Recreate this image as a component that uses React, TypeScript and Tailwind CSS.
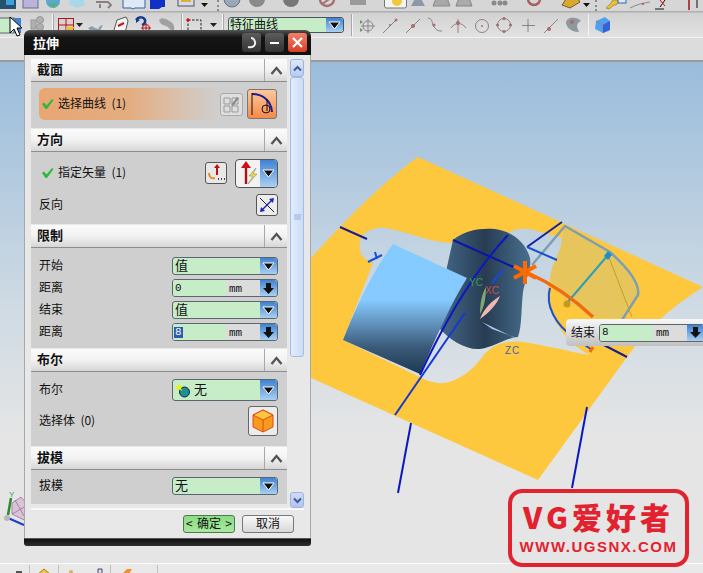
import React from "react";

const CJK = "font-['Noto_Sans_CJK_SC','Liberation_Sans',sans-serif]";

function ArrowBtn({ solid = false }: { solid?: boolean }) {
  return (
    <div className="w-[17px] shrink-0 self-stretch bg-gradient-to-b from-[#3f82d2] to-[#a9d0f2] flex items-center justify-center rounded-r-[3px]">
      {solid ? (
        <svg width="13" height="13" viewBox="0 0 13 13">
          <path d="M4 1h5v5h3l-5.500 6L1 6h3z" fill="#111" />
        </svg>
      ) : (
        <svg width="13" height="9" viewBox="0 0 13 9">
          <path d="M1 1h11L6.500 8z" fill="#111" stroke="#fff" strokeWidth="1" />
        </svg>
      )}
    </div>
  );
}

function Combo({ text, h = "h-[18px]", icon }: { text: string; h?: string; icon?: boolean }) {
  return (
    <div className={`w-[106px] ${h} flex border border-[#5c6670] rounded-[3px] bg-[#c6ecc8]`}>
      <div className="flex-1 flex items-center pl-[2px] gap-[3px] text-[13px] leading-none text-[#111]">
        {icon && (
          <svg width="16" height="16" viewBox="0 0 16 16">
            <circle cx="9.500" cy="10" r="5" fill="#1f8f8f" stroke="#123" strokeWidth="1" />
            <path d="M4 1l1 3 3 0-2 2 1 3-3-2-3 2 1-3-2-2 3 0z" fill="#e8f020" />
          </svg>
        )}
        <span className="pb-[3px]">{text}</span>
      </div>
      <ArrowBtn />
    </div>
  );
}

function NumBox({ value, selected }: { value: string; selected?: boolean }) {
  return (
    <div className="w-[106px] h-[18px] flex border border-[#5c6670] rounded-[3px] bg-[#dcdcdc] overflow-hidden font-['Liberation_Mono',monospace] text-[11px] leading-none text-[#111]">
      <div className="w-[53px] bg-[#c6ecc8] flex items-center pl-[1px]">
        <span className={selected ? "bg-[#2a5cb0] text-white px-[1px]" : "px-[1px]"}>{value}</span>
      </div>
      <div className="flex-1 flex items-center pl-[3px] pt-[2px]">mm</div>
      <ArrowBtn solid />
    </div>
  );
}

function Section({ title, bodyClass, children }: { title: string; bodyClass: string; children: React.ReactNode }) {
  return (
    <div className="w-[256px] mb-[1px]">
      <div className="h-[22px] flex items-stretch bg-gradient-to-b from-[#fbfbfb] via-[#f2f2f2] to-[#d6d6d6]">
        <div className="flex-1 pl-[6px] pb-[3px] flex items-center text-[13px] font-bold text-[#111] leading-none">{title}</div>
        <div className="w-[23px] border-l border-[#a8a8a8] flex items-center justify-center">
          <svg width="13" height="9" viewBox="0 0 13 9">
            <path d="M1.500 8L6.500 2l5 6" fill="none" stroke="#555" strokeWidth="2.400" />
          </svg>
        </div>
      </div>
      <div className={`border-t border-[#8d8d8d] bg-[#cfcfcf] ${bodyClass}`}>{children}</div>
    </div>
  );
}

function Row({ label, className, children }: { label: string; className: string; children: React.ReactNode }) {
  return (
    <div className={`flex items-center justify-between pl-[8px] pr-[9px] text-[12px] text-[#111] leading-none ${className}`}>
      <span className="pb-[3px]">{label}</span>
      {children}
    </div>
  );
}

function Check() {
  return (
    <svg width="13" height="12" viewBox="0 0 13 12" className="shrink-0">
      <path d="M1 6l2-1.500 2.500 3L11 1l1.500 1-6.500 9H4.500z" fill="#2cb83c" />
    </svg>
  );
}

function TopStrip() {
  return (
    <svg width="703" height="11" viewBox="0 0 703 11" className="block">
      <rect x="0" y="-6" width="16" height="15" fill="#26506e" />
      <rect x="6" y="-4" width="8" height="9" fill="#3f9fd8" />
      <rect x="23" y="-5" width="15" height="13" fill="#b9b4d8" stroke="#6a6a98" />
      <circle cx="53" cy="1" r="7" fill="#58a8d8" />
      <path d="M48 3l6 5 4-5z" fill="#5cb070" />
      <path d="M69-3h14l2 8-8 3-8-4z" fill="#a8d8ea" />
      <path d="M96 2h12l3 3-3 3M100 4v4" fill="none" stroke="#8a8080" strokeWidth="2" />
      <path d="M123-4h10l2 2 2-2h8v12h-10l-2 1-2-1h-8z" fill="#dfe8f5" stroke="#3062a8" />
      <path d="M150-4h15v11h-3l-3 2h-9z" fill="#1030c8" />
      <rect x="178" y="-5" width="16" height="11" fill="#d8d8f0" stroke="#555" />
      <rect x="181" y="-2" width="10" height="4" fill="#e0b030" />
      <path d="M201 3h7l-3.500 4z" fill="#111" />
      <path d="M218 0v2M218 5v2M218 9v2" stroke="#8a8a8a" strokeWidth="2" />
      <circle cx="232" cy="-1" r="8" fill="#9aa8b8" stroke="#6a7280" />
      <circle cx="257" cy="-1" r="8" fill="#8a8a8a" />
      <circle cx="291" cy="-1" r="8" fill="#777" />
      <circle cx="327" cy="-1" r="7" fill="none" stroke="#a87070" strokeWidth="2.500" />
      <path d="M322 4l9-6" stroke="#a87070" strokeWidth="2" />
      <rect x="350" y="-4" width="16" height="9" fill="#9a9a9a" />
      <rect x="384.500" y="-4" width="22" height="12" rx="2" fill="#f4f4f4" stroke="#777" />
      <circle cx="397" cy="1" r="5" fill="#f0c838" />
      <path d="M411 6l5-9h4l5 9z" fill="#8a98a8" />
      <path d="M433 6l3-8h11l3 8z" fill="#a8a8a8" stroke="#8a8a8a" />
      <path d="M456 6l3-8h10l3 8z" fill="#ababab" stroke="#907f7f" />
      <circle cx="494" cy="3" r="2.500" fill="#8a8a8a" />
      <circle cx="500" cy="3" r="2.500" fill="#8a8a8a" />
      <circle cx="505" cy="3" r="2.500" fill="#8a8a8a" />
      <circle cx="534" cy="-1" r="6" fill="none" stroke="#a86060" strokeWidth="2.500" />
      <path d="M562 5l4-6h12l2 3-10 6z" fill="#d8a830" stroke="#7a5a20" />
      <path d="M583 3h7l-3.500 4z" fill="#111" />
      <path d="M596 0v2M596 5v2M596 9v2" stroke="#8a8a8a" strokeWidth="2" />
      <path d="M606 8l5-5 2-3h4l2 2-3 3h-2l-5 4z" fill="#e8c040" stroke="#9a7a20" strokeWidth="0.700" />
      <rect x="618" y="-3" width="8" height="6" fill="#dfe8f5" stroke="#3062a8" />
      <path d="M630 8c6-3 12-5 20-6" fill="none" stroke="#8a8a8a" />
      <circle cx="643" cy="4" r="1" fill="#c04040" />
      <path d="M655 9h9M660 7l5-7" fill="none" stroke="#111" />
      <path d="M660 0l5 6" stroke="#d01010" />
      <path d="M689 0v10" stroke="#a01010" strokeWidth="1.500" />
      <path d="M697-2v10M697-.500h6" stroke="#111" fill="none" />
    </svg>
  );
}

function LeftStrip() {
  return (
    <svg width="228" height="25" viewBox="0 13 228 25" className="block shrink-0">
      <rect x="-1" y="18" width="15" height="15" fill="#c6ecc8" stroke="#5c6670" />
      <rect x="14" y="18" width="7" height="15" fill="#3f82d2" />
      <g fill="#b0b0b0" stroke="#989898">
        <circle cx="40" cy="20" r="3.500" />
        <circle cx="40" cy="27" r="3.500" />
        <rect x="31" y="20" width="5" height="9" />
      </g>
      <path d="M52.500 14v22" stroke="#f4f4f4" />
      <path d="M53.500 14v22" stroke="#a8a8a8" />
      <rect x="58.500" y="18.500" width="15" height="14" fill="#dbd0d0" stroke="#a81818" />
      <path d="M66 18v15M58 25h16" stroke="#a81818" />
      <path d="M66 27l8 0-2 6h-5z" fill="#f0c030" />
      <path d="M76 23h7l-3.500 4z" fill="#222" />
      <path d="M88 28c2 3 8 5 12 3l3-6-3 1-2 3-3-1-3-2z" fill="#8fa0ac" />
      <path d="M114 30l3-10 9-3 2 4-3 12-9-1z" fill="#f4f4f4" stroke="#555" />
      <path d="M118 26l6-3" stroke="#c01818" strokeWidth="2" />
      <path d="M136 20c3-4 8-3 9 0s-1 4-3 5" fill="none" stroke="#123a90" strokeWidth="2.500" />
      <path d="M136 18v5l4-3z" fill="#123a90" />
      <circle cx="146" cy="28" r="3.500" fill="none" stroke="#b01818" />
      <path d="M146 23v10M141 28h10" stroke="#b01818" />
      <path d="M159 20c4-4 8 0 12 2s4 8 2 10c-3-2-4-5-7-6s-6-2-7-6z" fill="#a0a0a0" />
      <path d="M181.500 14v22" stroke="#a8a8a8" />
      <path d="M182.500 14v22" stroke="#f4f4f4" />
      <path d="M188 20h13v12h-13z" fill="none" stroke="#222" strokeDasharray="2.500 1.500" />
      <circle cx="188" cy="20" r="1.700" fill="#d01010" />
      <path d="M210 23h7l-3.500 4z" fill="#222" />
      <path d="M222.500 14v22" stroke="#f4f4f4" />
      <path d="M223.500 14v22" stroke="#a8a8a8" />
    </svg>
  );
}

function RightStrip() {
  const g = "#8a8484";
  const r = "#a86c6c";
  return (
    <svg width="359" height="25" viewBox="344 13 359 25" className="block shrink-0">
      <path d="M351.500 14v22" stroke="#a8a8a8" />
      <path d="M352.500 14v22" stroke="#f4f4f4" />
      <g fill="none" stroke={g}>
        <circle cx="368" cy="26" r="5" />
        <path d="M368 19v14M361 26h14" />
        <path d="M383 33l14-14" />
        <path d="M406 33l14-14" />
        <path d="M428 18c6 1 3 7 7 10 2 3 4 3 7 3" />
        <path d="M451 28c4-6 11-6 15 0M458 19v14" />
        <circle cx="482" cy="26" r="6.500" />
        <circle cx="504" cy="25" r="6.500" />
        <path d="M528 19v13M522 25.500h13" />
        <path d="M544 33l14-14" />
      </g>
      <path d="M360 20v4l3-2zM360 28v4l3-2z" fill="#6a9a6a" />
      <g fill={r}>
        <circle cx="390" cy="25" r="1" />
        <circle cx="396" cy="20" r="1.500" />
        <circle cx="413" cy="26" r="2" />
        <circle cx="434" cy="25" r="1.500" />
        <circle cx="458" cy="23" r="2" />
        <circle cx="482" cy="26" r="1" />
        <circle cx="504" cy="18.500" r="1.500" />
        <circle cx="504" cy="31.500" r="1.500" />
        <circle cx="497.500" cy="25" r="1.500" />
        <circle cx="510.500" cy="25" r="1.500" />
        <circle cx="528" cy="25.500" r="0.800" />
        <circle cx="549" cy="29" r="2" />
      </g>
      <path d="M566 23c0-5 6-6 9-5 3 0 5 2 6 3-3 1-4 3-4 6l2 5c-6 0-12-3-13-9z" fill="#8d989f" />
      <circle cx="572" cy="22" r="2" fill="#a86c6c" />
      <path d="M588.500 14v22" stroke="#f4f4f4" strokeWidth="1" />
      <path d="M596 21l9-4 5 4v9l-7 3-8-4z" fill="#4aa4f0" />
      <path d="M596 21l7 4 7-4M603 25v8" fill="none" stroke="#d06080" strokeWidth="0.800" />
      <path d="M603 25v8l7-3v-9z" fill="#2448d8" opacity="0.700" />
    </svg>
  );
}

function Scene() {
  return (
    <svg className="absolute inset-0" width="703" height="501" viewBox="0 62 703 501">
      <defs>
        <linearGradient id="cyl" x1="0" y1="250" x2="0" y2="375" gradientUnits="userSpaceOnUse">
          <stop offset="0" stopColor="#84cbff" />
          <stop offset="0.400" stopColor="#86caff" />
          <stop offset="0.600" stopColor="#5f8fb8" />
          <stop offset="0.780" stopColor="#3a5a78" />
          <stop offset="1" stopColor="#1c3850" />
        </linearGradient>
        <linearGradient id="dark" x1="440" y1="0" x2="530" y2="0" gradientUnits="userSpaceOnUse">
          <stop offset="0" stopColor="#44688a" />
          <stop offset="0.500" stopColor="#283c52" />
          <stop offset="1" stopColor="#48708f" />
        </linearGradient>
      </defs>
      <path
        fillRule="evenodd"
        fill="#fdc83e"
        d="M418 157C385 180 345 220 300 270L300 373L538 480L627 357C650 325 675 305 703 287ZM360 247C357 235 372 226 385 228C410 232 430 243 453 243L500 240C510 228 525 226 540 232L562 238C566 250 555 265 552 275C544 290 548 310 558 325C566 338 575 348 590 355C570 352 545 345 523 342C505 340 490 345 480 360C468 375 450 385 438 383C430 382 425 380 420 377L343 340L373 263C365 260 359 255 360 247Z"
      />
      <path d="M453 240C465 230 480 228 495 229C510 231 525 240 530 258C532 270 525 280 523 292C521 310 522 325 518 337C505 338 495 347 480 349C465 350 450 340 438 327L447 267Z" fill="url(#dark)" />
      <path d="M393 244L467 278C450 305 435 340 420 374L343 340C355 310 370 275 393 244Z" fill="url(#cyl)" />
      <path d="M565 226L610 252C630 270 640 285 638 295L622 318L593 317C575 305 555 295 550 280C550 265 560 255 562 240Z" fill="#e6c55c" />
      <path d="M532 265L565 226L610 252C630 270 640 285 638 295L622 320" fill="none" stroke="#7d9fb5" strokeWidth="2.500" />
      <path d="M608 255L632 317" stroke="#c8a020" strokeWidth="1" />
      <path d="M567 303L608 255" stroke="#2ca0b8" strokeWidth="2" />
      <path d="M608 251l4 4-4 5-4-4z" fill="#1a90c8" />
      <circle cx="567" cy="304" r="3.500" fill="#c89820" />
      <g fill="none" strokeWidth="2">
        <path d="M340 227L367 239" stroke="#1c1c8c" />
        <path d="M453 240L520 270" stroke="#0a14a8" />
        <path d="M527 247L562 222" stroke="#1420a8" />
        <path d="M600 343L627 357" stroke="#1c1c8c" />
        <path d="M508 235C480 265 450 310 420 375" stroke="#0a18c0" />
        <path d="M465 313L395 415" stroke="#1438d0" />
        <path d="M492 283L503 270" stroke="#1a48d8" />
        <path d="M527 247L557 260" stroke="#1a50d0" />
        <path d="M550 288C545 305 555 325 575 338L592 350" stroke="#1a50d0" />
        <path d="M411 423L398 493" stroke="#0a18c0" />
        <path d="M587 407L572 488" stroke="#0a18c0" />
        <path d="M368 262L382 255M375 252L377 259" stroke="#1a50d0" />
        <path d="M528 273C555 285 575 300 593 317" stroke="#f26a10" strokeWidth="3.500" />
        <path d="M593 347L590 352" stroke="#f26a10" strokeWidth="3" />
      </g>
      <g stroke="#ff6a00" strokeWidth="4">
        <path d="M525 261V284M514 266L536 278M514 278L536 266" />
      </g>
      <path d="M480 314C480 300 483 292 486 287C486 298 484 308 480 314Z" fill="#7fa870" />
      <path d="M480 319C484 308 492 301 500 296C497 304 489 313 480 319Z" fill="#f0b8b0" />
      <path d="M482 322L517 339L514 337L492 329Z" fill="#a8c4ee" />
      <text x="469" y="286" fontFamily="Liberation Sans" fontSize="10" fill="#3e9a50">YC</text>
      <text x="485" y="294" fontFamily="Liberation Sans" fontSize="10" fill="#c85050">XC</text>
      <text x="505" y="354" fontFamily="Liberation Sans" fontSize="10" letterSpacing="1" fill="#4060b0">ZC</text>
      <path d="M12 503L21 497L28 505L24 520L12 514Z" fill="#d8c4d4" stroke="#a070a0" strokeWidth="0.800" />
      <path d="M15 500L24 516M12 514L26 506" stroke="#a070a0" strokeWidth="0.800" />
      <path d="M11 498L8 515" stroke="#2a8a30" strokeWidth="2.500" />
      <text x="9" y="497" fontFamily="Liberation Sans" fontSize="8" fill="#3e9a50">Y</text>
      <path d="M8 518L24 525" stroke="#1840d0" strokeWidth="2" />
      <circle cx="7" cy="518" r="3" fill="#b8b8b8" />
    </svg>
  );
}

export default function App() {
  return (
    <div className={`relative w-[703px] h-[573px] overflow-hidden flex flex-col bg-[#dcdcdc] ${CJK}`}>
      <div className="h-[11px] bg-[#d6d6d6] overflow-hidden">
        <TopStrip />
      </div>
      <div className="h-[2px] bg-gradient-to-b from-[#a6a6a6] to-[#c8c8c8]" />
      <div className="h-[25px] flex items-center bg-gradient-to-b from-[#d2d2d2] to-[#e2e2e2] border-b border-[#f0f0f0]">
        <LeftStrip />
        <div className="w-[116px] h-[16px] flex border border-[#4a5560] rounded-[3px] bg-[#c6ecc8]">
          <div className="flex-1 flex items-center text-[12px] leading-none text-[#111] pl-[1px] pb-[2px]">特征曲线</div>
          <ArrowBtn />
        </div>
        <RightStrip />
      </div>
      <div className="h-[22px] bg-[#dcdcdc]" />
      <div className="h-[2px] bg-[#9a9a9a]" />

      <div className="relative flex-1 bg-gradient-to-b from-[#9abcdb] via-[#d0dbe4] via-50% to-[#e5e5e5] to-75%">
        <Scene />
      </div>

      <div className="h-[10px] bg-[#e9e9e9] border-t border-[#fafafa] flex items-start pt-[1px] overflow-hidden">
        <svg width="160" height="9" viewBox="0 563 160 9" className="block">
          <path d="M16 570h6" stroke="#222" strokeWidth="1.500" />
          <path d="M29.500 563v10M58.500 563v10M110.500 563v10M157.500 563v10" stroke="#c0c0c0" />
          <path d="M38 572l6-5 6 5z" fill="#f0c838" stroke="#a08020" />
          <circle cx="71" cy="570" r="2" fill="#d8b060" />
          <path d="M98 572v-5h4v5" fill="#dde" stroke="#446" />
          <path d="M122 572l5-5h5l-3 5z" fill="#f09030" />
        </svg>
      </div>

      {/* cursor */}
      <svg className="absolute left-[9px] top-[16px] z-10" width="14" height="22" viewBox="0 0 14 22">
        <path d="M1 1v16l4-4 3 7 3-1-3-7h5z" fill="#fff" stroke="#000" />
      </svg>

      {/* feature dialog */}
      <div className="absolute left-[24px] top-[30px] w-[287px] h-[516px] flex flex-col">
        <div className="h-[25px] rounded-t-[6px] bg-gradient-to-b from-[#565656] via-[#141414] via-30% to-[#111] flex items-center pl-[9px] pr-[4px] gap-[4px]">
          <div className="flex-1 text-white font-bold text-[13px] leading-none">拉伸</div>
          <div className="w-[19px] h-[19px] rounded-[3px] bg-gradient-to-b from-[#5c5c5c] to-[#333] flex items-center justify-center">
            <svg width="13" height="13" viewBox="0 0 13 13">
              <path d="M3 11c4 1 8-1 7-5S7 2 6 2" fill="none" stroke="#eee" strokeWidth="2" />
            </svg>
          </div>
          <div className="w-[19px] h-[19px] rounded-[3px] bg-gradient-to-b from-[#5c5c5c] to-[#333] flex items-center justify-center">
            <div className="w-[9px] h-[2px] bg-white" />
          </div>
          <div className="w-[19px] h-[19px] rounded-[3px] bg-gradient-to-b from-[#f08068] to-[#d83c24] flex items-center justify-center">
            <svg width="13" height="13" viewBox="0 0 13 13">
              <path d="M2 2l9 9M11 2l-9 9" stroke="#fff" strokeWidth="2.200" />
            </svg>
          </div>
        </div>
        <div className="h-[483px] flex flex-col bg-[#e8e8e8] border-x border-[#a8a8a8]">
          <div className="h-[453px] flex pt-[4px] pl-[6px]">
            <div className="w-[256px] shrink-0">
              <Section title="截面" bodyClass="h-[47px] pt-[6px] pl-[8px] pr-[10px]">
                <div className="h-[32px] flex items-center justify-between">
                  <div className="w-[180px] h-full rounded-l-[6px] bg-gradient-to-r from-[#e8a673] via-[#e4ad80] to-[#cfcfcf] flex items-center pl-[2px] gap-[4px] text-[12px] leading-none text-[#111]">
                    <Check />
                    <span className="pb-[2px]">选择曲线 {"\u00a0"}(1)</span>
                  </div>
                  <div className="flex items-center gap-[4px]">
                    <div className="w-[23px] h-[23px] rounded-[3px] border border-[#aaa] bg-[#dedede] flex items-center justify-center">
                      <svg width="17" height="17" viewBox="0 0 17 17">
                        <path d="M1 2h6v6H1zM1 10h6v6H1zM9 10h6v6H9zM9 2h6v6H9z" fill="none" stroke="#999" />
                        <path d="M8 9l6-8 2 1-6 8z" fill="#8a8a8a" />
                      </svg>
                    </div>
                    <div className="w-[30px] h-[30px] rounded-[3px] border border-[#777] bg-gradient-to-b from-[#fbc89c] to-[#f58a48] flex items-center justify-center">
                      <svg width="26" height="26" viewBox="0 0 26 26">
                        <path d="M3 3c10 0 19 6 20 18" fill="none" stroke="#1a1a9a" strokeWidth="2" />
                        <path d="M3 2v22" stroke="#111" />
                        <circle cx="17" cy="18" r="4" fill="none" stroke="#111" />
                        <path d="M18 8v12" stroke="#111" />
                      </svg>
                    </div>
                  </div>
                </div>
              </Section>
              <Section title="方向" bodyClass="h-[73px] pr-[9px]">
                <div className="h-[42px] flex items-center pl-[10px] gap-[4px] text-[12px] leading-none text-[#111]">
                  <Check />
                  <span className="flex-1 pb-[2px]">指定矢量 {"\u00a0"}(1)</span>
                  <div className="w-[22px] h-[22px] rounded-[3px] border border-[#555] bg-[#e8e8e8] mr-[4px] flex items-center justify-center">
                    <svg width="18" height="18" viewBox="0 0 18 18">
                      <path d="M10 2v9" stroke="#c01010" strokeWidth="2" />
                      <path d="M10 0l3 4H7z" fill="#c01010" />
                      <path d="M2 9c0 5 3 6 6 5" fill="none" stroke="#e89020" strokeWidth="2" />
                      <path d="M11 15h1M14 15h1M17 15h1" stroke="#111" strokeWidth="1.500" />
                    </svg>
                  </div>
                  <div className="w-[43px] h-[29px] flex rounded-[4px] border border-[#555] overflow-hidden bg-[#f2f2f2]">
                    <div className="flex-1 flex items-center justify-center">
                      <svg width="24" height="26" viewBox="0 0 24 26">
                        <path d="M10 6v18" stroke="#b01010" strokeWidth="2.400" />
                        <path d="M10 1l5 7H5z" fill="#d01010" />
                        <path d="M20 8l-7 8 4 0-5 8 9-10-4 0z" fill="#f0e040" stroke="#777" strokeWidth="0.500" />
                      </svg>
                    </div>
                    <ArrowBtn />
                  </div>
                </div>
                <div className="flex items-center justify-between pl-[8px] text-[12px] leading-none text-[#111]">
                  <span className="pb-[3px]">反向</span>
                  <div className="w-[22px] h-[22px] rounded-[3px] border border-[#555] bg-[#ececec] flex items-center justify-center">
                    <svg width="16" height="16" viewBox="0 0 16 16">
                      <path d="M1 1l14 14" stroke="#222" />
                      <path d="M2 14l11-11" stroke="#1a2ab0" strokeWidth="1.500" />
                      <path d="M15 1l-5 1 4 4zM1 15l5-1-4-4z" fill="#1a2ab0" />
                    </svg>
                  </div>
                </div>
              </Section>
              <Section title="限制" bodyClass="h-[101px] pt-[9px] flex flex-col gap-[4px]">
                <Row label="开始" className="h-[18px]"><Combo text="值" /></Row>
                <Row label="距离" className="h-[18px]"><NumBox value="0" /></Row>
                <Row label="结束" className="h-[18px]"><Combo text="值" /></Row>
                <Row label="距离" className="h-[18px]"><NumBox value="8" selected /></Row>
              </Section>
              <Section title="布尔" bodyClass="h-[75px] pt-[7px] flex flex-col gap-[5px]">
                <Row label="布尔" className="h-[22px]"><Combo text="无" h="h-[22px]" icon /></Row>
                <Row label={"选择体 \u00a0(0)"} className="h-[30px]">
                  <div className="w-[30px] h-[30px] rounded-[3px] border border-[#666] bg-[#ececec] flex items-center justify-center">
                    <svg width="22" height="24" viewBox="0 0 22 24">
                      <path d="M11 1l10 5v12l-10 5-10-5V6z" fill="#f89a20" stroke="#e04a10" />
                      <path d="M1 6l10 5 10-5-10-5z" fill="#fcc640" stroke="#e04a10" />
                      <path d="M11 11v12" stroke="#e04a10" />
                    </svg>
                  </div>
                </Row>
              </Section>
              <Section title="拔模" bodyClass="h-[35px] pt-[7px]">
                <Row label="拔模" className="h-[18px]"><Combo text="无" /></Row>
              </Section>
            </div>
            <div className="w-[14px] ml-[3px] flex flex-col">
              <div className="h-[18px] rounded-[3px] border border-[#9db4e0] bg-gradient-to-b from-[#dfe8f8] to-[#b8ccf0] flex items-center justify-center">
                <svg width="9" height="7" viewBox="0 0 9 7"><path d="M1 5.500L4.500 2 8 5.500" fill="none" stroke="#3c5a9a" strokeWidth="2" /></svg>
              </div>
              <div className="h-[280px] rounded-[3px] border border-[#a4bce8] bg-gradient-to-r from-[#e2ecfb] to-[#cddcf6] flex items-center justify-center">
                <svg width="7" height="7" viewBox="0 0 7 7"><path d="M0 1h7M0 3h7M0 5h7" stroke="#9ab0d8" /></svg>
              </div>
              <div className="flex-1 bg-[#e8e8e8]" />
              <div className="h-[16px] rounded-[3px] border border-[#9db4e0] bg-gradient-to-b from-[#d0dcf4] to-[#b0c4ee] flex items-center justify-center">
                <svg width="9" height="7" viewBox="0 0 9 7"><path d="M1 1.500L4.500 5 8 1.500" fill="none" stroke="#3c5a9a" strokeWidth="2" /></svg>
              </div>
            </div>
          </div>
          <div className="h-[30px] bg-[#e8e8e8] border-t-2 border-[#f8f8f8] mx-[6px] flex items-start justify-end gap-[7px] pt-[5px] pr-[10px]">
            <div className="w-[52px] h-[18px] rounded-[3px] border border-[#4c7a48] bg-gradient-to-b from-[#8bdc84] to-[#a8e8a0] text-[12px] leading-none text-[#111] flex items-center justify-between px-[2px] pb-[2px]">
              <span>&lt;</span>
              <span>确定</span>
              <span>&gt;</span>
            </div>
            <div className="w-[52px] h-[18px] rounded-[3px] border border-[#777] bg-gradient-to-b from-[#f8f8f8] to-[#d8d8d8] text-[12px] leading-none text-[#111] flex items-center justify-center pb-[2px]">取消</div>
          </div>
        </div>
        <div className="h-[8px] rounded-b-[3px] bg-gradient-to-b from-[#111] to-[#2e2e2e] border-t border-[#555]" />
      </div>

      {/* floating value widget */}
      <div className="absolute left-[566px] top-[319px] w-[140px] h-[27px] rounded-l-[4px] bg-gradient-to-b from-[#f8f8f8] to-[#c0c0c0] flex items-center pl-[5px] gap-[4px] text-[12px] leading-none text-[#111]">
        <span className="pb-[2px]">结束</span>
        <div className="w-[106px] h-[18px] flex border border-[#5c6670] rounded-[3px] bg-[#dcdcdc] overflow-hidden font-['Liberation_Mono',monospace] text-[11px] leading-none">
          <div className="w-[53px] bg-[#c6ecc8] flex items-center pl-[2px]">8</div>
          <div className="flex-1 flex items-center pl-[3px] pt-[2px]">mm</div>
          <ArrowBtn solid />
        </div>
      </div>

      {/* watermark */}
      <div className="absolute left-[508px] top-[489px] w-[181px] h-[78px] rounded-[14px] border-[4px] border-[#e2232f] flex flex-col items-center text-[#e2232f]">
        <div className="h-[46px] flex items-center font-black text-[30px] leading-none tracking-[4px] whitespace-nowrap">VG爱好者</div>
        <div className="font-['Liberation_Sans',sans-serif] font-bold text-[15px] leading-none tracking-[1.500px] whitespace-nowrap">WWW.UGSNX.COM</div>
      </div>
    </div>
  );
}
